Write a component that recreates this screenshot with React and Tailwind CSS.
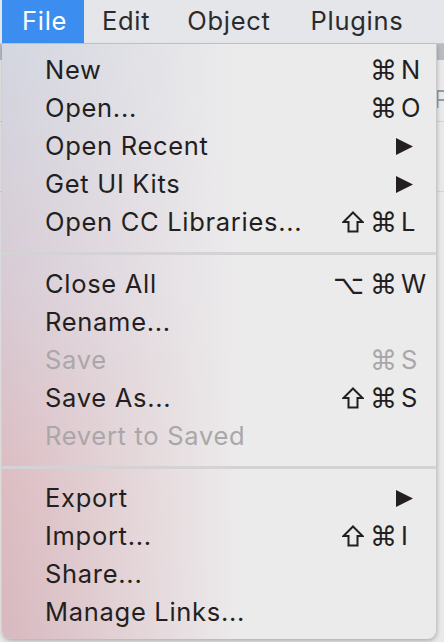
import React from 'react'

const SANS = "font-['Inter','Liberation_Sans',sans-serif]"
const SYM = "font-['DejaVu_Sans',sans-serif]"

const GROUPS = [
  [
    { label: 'New', mods: '⌘', key: 'N' },
    { label: 'Open...', mods: '⌘', key: 'O' },
    { label: 'Open Recent', sub: true },
    { label: 'Get UI Kits', sub: true },
    { label: 'Open CC Libraries...', mods: '⇧⌘', key: 'L' },
  ],
  [
    { label: 'Close All', mods: '⌥⌘', key: 'W' },
    { label: 'Rename...' },
    { label: 'Save', mods: '⌘', key: 'S', disabled: true },
    { label: 'Save As...', mods: '⇧⌘', key: 'S' },
    { label: 'Revert to Saved', disabled: true },
  ],
  [
    { label: 'Export', sub: true },
    { label: 'Import...', mods: '⇧⌘', key: 'I' },
    { label: 'Share...' },
    { label: 'Manage Links...' },
  ],
]

function Mod({ m, fill }) {
  // shift is drawn as the wide outlined arrow macOS uses
  if (m === '⇧') return (
    <svg width="22" height="22" viewBox="0 0 22 22" aria-label="⇧">
      <path d="M11 1.5 L20.5 11 L15.5 11 L15.5 20.5 L6.5 20.5 L6.5 11 L1.5 11 Z"
        fill="none" stroke={fill} strokeWidth="2" strokeLinejoin="miter" />
    </svg>
  )
  return <span className="text-[27px]">{m}</span>
}

function MenuItem({ item }) {
  const color = item.disabled ? 'text-[#a9a7a9]' : 'text-[#231f21]'
  const fill = item.disabled ? '#a9a7a9' : '#231f21'
  return (
    <div className={`flex items-center h-[38px] pl-[43px] pr-[7px] ${color}`}>
      <span className="flex-1 text-[25.5px] tracking-[0.7px] leading-none whitespace-nowrap">{item.label}</span>

      {/* shortcut: modifiers right-aligned, key letter in its own column */}
      <div className="flex items-center">
        <span className={`flex gap-[6px] items-center justify-end leading-none ${SYM}`}>
          {item.mods && [...item.mods].map((m, i) => <Mod key={i} m={m} fill={fill} />)}
        </span>
        <span className="w-[28px] ml-[4px] text-[25.5px] leading-none">
          {item.key}
          {item.sub && (
            <svg width="17" height="17" viewBox="0 0 17 17" className="-ml-[5px] block">
              <path d="M0 0 L17 8.5 L0 17 Z" fill={fill} />
            </svg>
          )}
        </span>
      </div>
    </div>
  )
}

export default function App() {
  return (
    <div className={`relative w-[444px] h-[642px] overflow-hidden bg-[#e9e9ea] ${SANS}`}>
      {/* menu bar */}
      <div className="flex items-center h-[44px] bg-[#e4e6ea] border-b border-[#c4c6ca] text-[25.5px] tracking-[0.7px] text-[#2b2b2d] whitespace-nowrap">
        <div className="flex items-center h-full ml-[2px] pl-[20px] w-[82px] bg-[#3b8ef0] text-white">File</div>
        <span className="ml-[18px]">Edit</span>
        <span className="ml-[37px]">Object</span>
        <span className="ml-[40px]">Plugins</span>
      </div>

      {/* app window behind the menu */}
      <div className="flex h-[598px]">
        <div className="w-[3px] bg-[linear-gradient(to_bottom,#59647a,#4a3b4d_40%,#6e2a2f_75%,#5a2226)]" />
        <div className="flex-1 flex flex-col">
          <div className="h-[16px] bg-[#b8bcc2]" />
          <div className="h-[62px] border-b border-[#d2d2d2] text-[24px] leading-none pt-[28px] text-[#9a9a9a] pl-[434px]">P</div>
          <div className="h-[70px] border-b border-[#d4d4d4]" />
        </div>
      </div>

      {/* dropdown */}
      <div className="absolute left-[2px] top-[44px] w-[435px] h-[595px] pt-[7px] rounded-b-[9px] border-r border-[#c9c8ca] shadow-[0_2px_4px_rgba(0,0,0,0.25)] bg-[linear-gradient(to_right,rgba(236,235,236,0)_0%,rgba(236,235,236,1)_55%),linear-gradient(to_bottom,#d3d6e0_0%,#d8cbd5_40%,#dcbcc1_75%,#d7b8bf_100%)]">
        {GROUPS.map((group, gi) => (
          <div key={gi}>
            {gi > 0 && (
              <div className="h-[24px] flex items-center">
                <div className="h-[3px] w-full bg-[#d4d2d5]" />
              </div>
            )}
            {group.map(item => <MenuItem key={item.label} item={item} />)}
          </div>
        ))}
      </div>
    </div>
  )
}
